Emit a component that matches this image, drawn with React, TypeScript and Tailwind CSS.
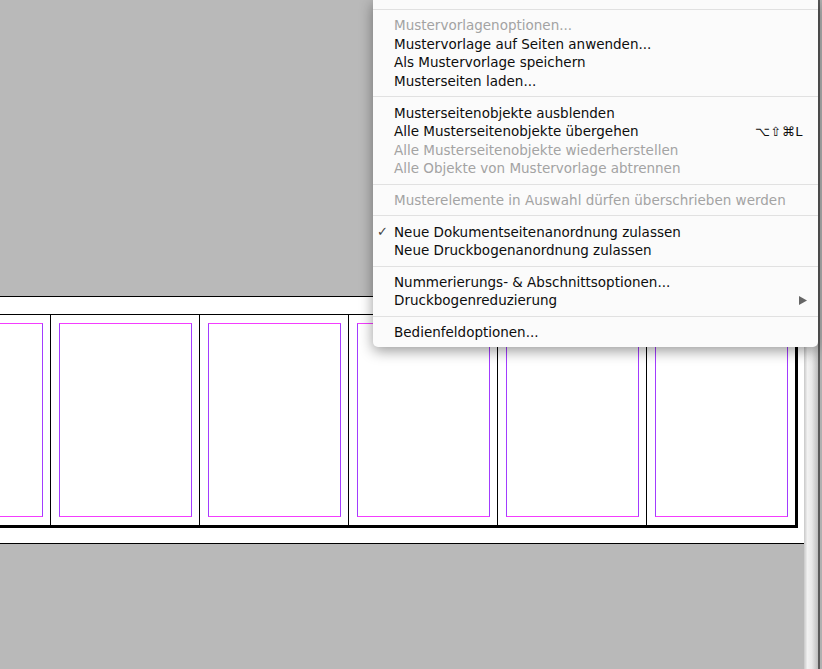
import React from "react";

type Item = {
  label: string;
  disabled?: boolean;
  checked?: boolean;
  shortcut?: string;
  submenu?: boolean;
};

const groups: Item[][] = [
  [
    { label: "Mustervorlagenoptionen...", disabled: true },
    { label: "Mustervorlage auf Seiten anwenden..." },
    { label: "Als Mustervorlage speichern" },
    { label: "Musterseiten laden..." },
  ],
  [
    { label: "Musterseitenobjekte ausblenden" },
    { label: "Alle Musterseitenobjekte übergehen", shortcut: "⌥⇧⌘L" },
    { label: "Alle Musterseitenobjekte wiederherstellen", disabled: true },
    { label: "Alle Objekte von Mustervorlage abtrennen", disabled: true },
  ],
  [{ label: "Musterelemente in Auswahl dürfen überschrieben werden", disabled: true }],
  [
    { label: "Neue Dokumentseitenanordnung zulassen", checked: true },
    { label: "Neue Druckbogenanordnung zulassen" },
  ],
  [
    { label: "Nummerierungs- & Abschnittsoptionen..." },
    { label: "Druckbogenreduzierung", submenu: true },
  ],
  [{ label: "Bedienfeldoptionen..." }],
];

function Page() {
  return (
    <div className="w-[149px] shrink-0 border-l border-black pt-[8px] pb-[8px] pl-[8px] pr-[7px]">
      <div className="h-full w-full border-y border-y-[#f43cff] border-x border-x-[#a23cff]" />
    </div>
  );
}

function MenuRow({ item }: { item: Item }) {
  return (
    <div
      className={`relative flex h-[18.6px] items-center pl-[21px] pr-[15px] ${
        item.disabled ? "text-[#a3a3a3]" : "text-[#0d0d0d]"
      }`}
    >
      {item.checked && (
        <span className="absolute left-[4px] text-[13px] text-[#444]">✓</span>
      )}
      <span className="flex-1 whitespace-nowrap">{item.label}</span>
      {item.shortcut && (
        <span className="text-[13px] tracking-[0.5px]">{item.shortcut}</span>
      )}
      {item.submenu && (
        <svg width="8" height="9" viewBox="0 0 8 9" className="mr-[-4px]">
          <path d="M0 0 L8 4.5 L0 9 Z" fill="#666" />
        </svg>
      )}
    </div>
  );
}

export default function App() {
  return (
    <div className="relative flex h-[669px] w-[822px] overflow-hidden bg-[#b9b9b9] font-['DejaVu_Sans',sans-serif]">
      <div className="flex w-[804px] shrink-0 flex-col">
        <div className="h-[296px]" />
        {/* pasteboard with the spread */}
        <div className="flex h-[248px] justify-end overflow-hidden border-y border-black bg-white pt-[17px] pb-[15px] pr-[6px]">
          <div className="flex h-[214px] shrink-0 border-t border-black border-b-[3px] border-r-[3px] border-b-black border-r-black">
            <Page />
            <Page />
            <Page />
            <Page />
            <Page />
            <Page />
          </div>
        </div>
        <div className="flex-1" />
      </div>
      {/* window edge */}
      <div className="flex w-[18px] shrink-0">
        <div className="w-[14px] bg-[linear-gradient(to_right,#c8c8c8,#f2f2f2_25%,#e9e9e9_55%,#bdbdbd)]" />
        <div className="w-[2px] bg-[#5a5a5a]" />
        <div className="w-[2px] bg-[#b0b0b0]" />
      </div>

      {/* panel menu */}
      <div className="absolute left-[373px] top-0 w-[445px] rounded-b-[5px] bg-[#fbfbfb] text-[13.5px] shadow-[0_4px_14px_rgba(0,0,0,0.4)]">
        <div className="h-[9px]" />
        {groups.map((group, i) => (
          <div key={i} className="border-t border-[#e1e1e1] py-[6px]">
            {group.map((item) => (
              <MenuRow key={item.label} item={item} />
            ))}
          </div>
        ))}
      </div>
    </div>
  );
}
